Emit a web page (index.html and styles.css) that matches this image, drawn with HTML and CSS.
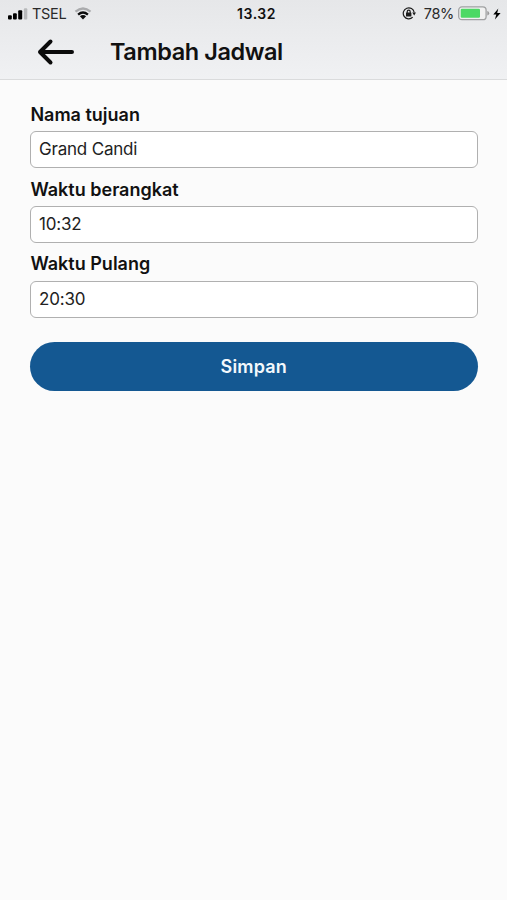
FILE: index.html
```html
<!DOCTYPE html>
<html lang="id">
<head>
<meta charset="utf-8">
<title>Tambah Jadwal</title>
<link rel="stylesheet" href="styles.css">
</head>
<body>
<header class="top">
  <div class="status">
    <div class="status-left">
      <svg class="signal" width="20" height="12" viewBox="0 0 20 12"><rect x="0" y="7.2" width="3.8" height="4.3" rx="1"/><rect x="5" y="5.2" width="3.8" height="6.3" rx="1"/><rect x="10.2" y="2.2" width="4" height="9.3" rx="1"/><rect x="15.9" y="0.3" width="3.4" height="11.2" rx="1" fill="#b8b9bb"/></svg>
      <span class="carrier">TSEL</span>
      <svg class="wifi" width="18" height="13" viewBox="0 0 18 13" fill="none" stroke-width="2.3"><path d="M1.5 4.7Q9-1.7 16.5 4.7" stroke="#aaabad"/><path d="M4.1 7.6Q9 3.4 13.9 7.6" stroke="#0b0b0b"/><path d="M5.9 9.2Q9 6.9 12.1 9.2L9 12.4Z" fill="#0b0b0b"/></svg>
    </div>
    <div class="clock">13.32</div>
    <div class="status-right">
      <svg class="lock" width="14" height="14" viewBox="0 0 14 14" fill="none" stroke="#1c1c1c" stroke-width="1.2"><path d="M10.7 10.2A5.5 5.5 0 1 1 12.2 5.5"/><path d="M10.2 5.6H14L12.2 8.6Z" fill="#1c1c1c" stroke="none"/><path d="M5.2 6V4.7a1.5 1.5 0 0 1 3 0V6"/><rect x="4" y="5.6" width="5.4" height="3.8" rx=".5" fill="#1c1c1c" stroke="none"/></svg>
      <span class="percent">78%</span>
      <svg class="battery" width="32" height="15" viewBox="0 0 32 15"><rect x=".7" y=".9" width="27.4" height="12.8" rx="3.3" fill="#f1f1f1" stroke="#a0a1a2" stroke-width="1.3"/><rect x="2.7" y="2.8" width="19.3" height="9" rx="1.2" fill="#4cd964"/><path d="M29.3 5.1Q31.2 5.6 31.2 7.3T29.3 9.5Z" fill="#999"/></svg>
      <svg class="bolt" width="8" height="12" viewBox="0 0 8 12"><path d="M5.3.4.3 6.6H3.3L1.9 11.6 7.6 4.9H4.2Z"/></svg>
    </div>
  </div>
  <div class="bar">
    <svg class="back" width="38" height="28" viewBox="0 0 38 28" fill="none" stroke="#0b0b0b" stroke-width="4" stroke-linecap="round" stroke-linejoin="round"><path d="M35 14H3M13.5 3.5 3 14l10.5 10.5"/></svg>
    <h1 class="title">Tambah Jadwal</h1>
  </div>
</header>
<main class="form">
  <label class="field"><span class="label">Nama tujuan</span><input class="input" value="Grand Candi"></label>
  <label class="field"><span class="label">Waktu berangkat</span><input class="input" value="10:32"></label>
  <label class="field"><span class="label">Waktu Pulang</span><input class="input" value="20:30"></label>
  <button class="save">Simpan</button>
</main>
</body>
</html>
```
FILE: styles.css
```css
* { box-sizing: border-box; }
body {
  margin: 0;
  min-height: 900px;
  background: #fbfbfb;
  color: #111;
  font-family: Inter, "Liberation Sans", sans-serif;
}
.top {
  height: 80px;
  background: linear-gradient(#e6e7e9, #f0f1f3);
  border-bottom: 1.5px solid #dadbdc;
}
.status {
  display: grid;
  grid-template-columns: 1fr auto 1fr;
  height: 27px;
  padding: 0 6px 0 8px;
  align-items: center;
}
.status-left, .status-right { display: flex; align-items: center; }
.status-right { justify-content: flex-end; }
.signal { margin-right: 4px; }
.carrier { font-size: 14.5px; letter-spacing: -0.3px; color: #2a2a2a; }
.wifi { margin-left: 8px; }
.clock { padding-left: 4px; font-size: 14px; font-weight: 600; letter-spacing: 0.5px; }
.lock { margin-right: 8px; }
.percent { font-size: 14.5px; letter-spacing: -0.3px; color: #2a2a2a; }
.battery { margin: 0 3px 0 4px; }
.bar { display: flex; align-items: center; height: 49px; padding-left: 36.5px; }
.back { margin-right: 35.5px; }
.title { margin: 0; font-size: 23.5px; line-height: 30px; font-weight: 600; letter-spacing: -0.42px; }
.form { display: flex; flex-direction: column; padding: 24px 29.5px 0 30px; }
.field { display: flex; flex-direction: column; height: 74.7px; }
.label { height: 27.3px; padding-left: 0.4px; line-height: 22px; font-size: 18px; font-weight: 600; }
.input {
  width: 100%;
  height: 37px;
  padding: 0 8px 1px;
  border: 1.5px solid #b0b0b0;
  border-radius: 6px;
  background: #fff;
  color: #222;
  font: 400 17px Inter, "Liberation Sans", sans-serif;
  letter-spacing: -0.2px;
  outline: none;
}
.save {
  height: 49px;
  margin-top: 14px;
  padding: 0;
  border: 0;
  border-radius: 25px;
  background: #145892;
  color: #f3f8fc;
  font: 600 18px Inter, "Liberation Sans", sans-serif;
  letter-spacing: 0.15px;
}
```
